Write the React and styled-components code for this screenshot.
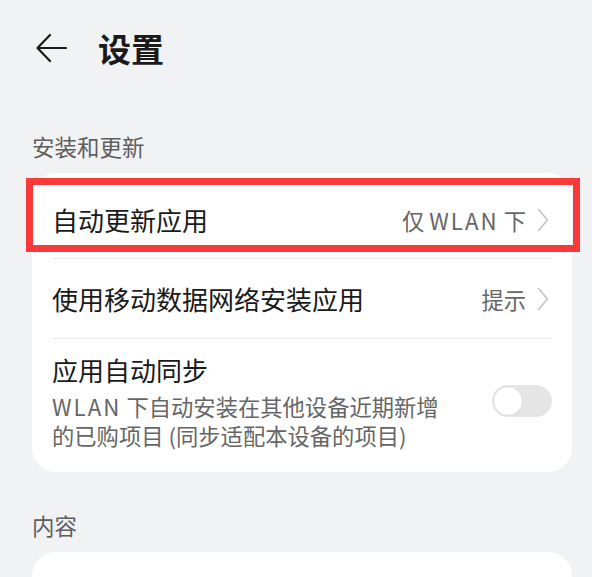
import React, { useState } from 'react';
import styled, { createGlobalStyle } from 'styled-components';

const GlobalStyle = createGlobalStyle`
  html, body {
    margin: 0;
    padding: 0;
    background: #f1f2f4;
  }
  body {
    font-family: "Noto Sans CJK SC", "Noto Sans", sans-serif;
    -webkit-font-smoothing: antialiased;
  }
`;

const SettingsPage = () => {
  const [autoSync, setAutoSync] = useState(false);

  return (
    <Page>
      <GlobalStyle />
      <Header>
        <BackButton aria-label="返回">
          <svg width="32" height="32" viewBox="0 0 32 32" fill="none">
            <path d="M31 16H3M15 3L2.5 16L15 29" stroke="#1a1a1a" strokeWidth="2.2" strokeLinecap="round" strokeLinejoin="round" />
          </svg>
        </BackButton>
        <Title>设置</Title>
      </Header>

      <SectionLabel>安装和更新</SectionLabel>
      <Card>
        <Highlight />
        <Row height={77}>
          <RowTitle>自动更新应用</RowTitle>
          <RowValue>
            <span>仅 <Latin>WLAN</Latin> 下</span>
            <Chevron />
          </RowValue>
        </Row>
        <Divider />
        <Row height={79}>
          <RowTitle>使用移动数据网络安装应用</RowTitle>
          <RowValue>
            提示
            <Chevron />
          </RowValue>
        </Row>
        <Divider />
        <ToggleRow>
          <RowText>
            <RowTitle>应用自动同步</RowTitle>
            <RowSubtitle>
              <Latin>WLAN</Latin> 下自动安装在其他设备近期新增的已购项目 (同步适配本设备的项目)
            </RowSubtitle>
          </RowText>
          <Switch on={autoSync} onClick={() => setAutoSync(!autoSync)}>
            <Knob on={autoSync} />
          </Switch>
        </ToggleRow>
      </Card>

      <SectionLabel top={38}>内容</SectionLabel>
      <Card>
        <Row height={120} />
      </Card>
    </Page>
  );
};

const Chevron = () => (
  <ChevronIcon width="12" height="24" viewBox="0 0 12 24" fill="none">
    <path d="M1.5 1.5L10.5 12L1.5 22.5" stroke="#c4c4c4" strokeWidth="1.6" strokeLinecap="round" strokeLinejoin="round" />
  </ChevronIcon>
);

const Page = styled.div`
  padding: 0 20px 0 32px;
`;

const Header = styled.div`
  height: 96px;
  display: flex;
  align-items: center;
  padding-left: 3px;
`;

const BackButton = styled.button`
  display: flex;
  padding: 0;
  border: none;
  background: none;
  cursor: pointer;
`;

const Title = styled.h1`
  margin: 0 0 0 31px;
  font-size: 33px;
  font-weight: 700;
  line-height: 40px;
  color: #1a1a1a;
`;

const SectionLabel = styled.div`
  margin-top: ${({ top }) => top ?? 35}px;
  margin-bottom: 12px;
  font-size: 22.5px;
  line-height: 30px;
  color: #5e5e5e;
`;

const Card = styled.div`
  position: relative;
  background: #ffffff;
  border-radius: 24px;
  padding: 8px 20px 0;
`;

const Highlight = styled.div`
  position: absolute;
  top: 5px;
  left: -6px;
  right: -8px;
  height: 74px;
  box-sizing: border-box;
  border: 7px solid #f83a3b;
  pointer-events: none;
`;

const Row = styled.div`
  height: ${({ height }) => height}px;
  display: flex;
  align-items: center;
  justify-content: space-between;
`;

const ToggleRow = styled.div`
  display: flex;
  align-items: center;
  justify-content: space-between;
  padding: 15px 0 22px;
`;

const RowText = styled.div`
  display: flex;
  flex-direction: column;
`;

const RowTitle = styled.div`
  font-size: 26px;
  line-height: 32px;
  color: #1a1a1a;
`;

const Latin = styled.span`
  letter-spacing: 0.09em;
`;

const RowSubtitle = styled.div`
  max-width: 405px;
  margin-top: 6px;
  font-size: 22.3px;
  line-height: 29px;
  color: #666666;
`;

const RowValue = styled.div`
  display: flex;
  align-items: center;
  gap: 11px;
  font-size: 22.3px;
  line-height: 30px;
  color: #666666;
`;

const ChevronIcon = styled.svg`
  margin-right: 3px;
`;

const Divider = styled.div`
  height: 1px;
  background: #e8e8e8;
`;

const Switch = styled.button`
  width: 60px;
  height: 32px;
  padding: 1px;
  border: none;
  border-radius: 16px;
  display: flex;
  align-items: center;
  justify-content: ${({ on }) => (on ? 'flex-end' : 'flex-start')};
  background: ${({ on }) => (on ? '#0a59f7' : '#e5e5e5')};
  margin-top: -3px;
  cursor: pointer;
`;

const Knob = styled.span`
  width: 30px;
  height: 30px;
  box-sizing: border-box;
  border-radius: 50%;
  background: #ffffff;
  border: 1.5px solid #d9d9d9;
`;

export default SettingsPage;
